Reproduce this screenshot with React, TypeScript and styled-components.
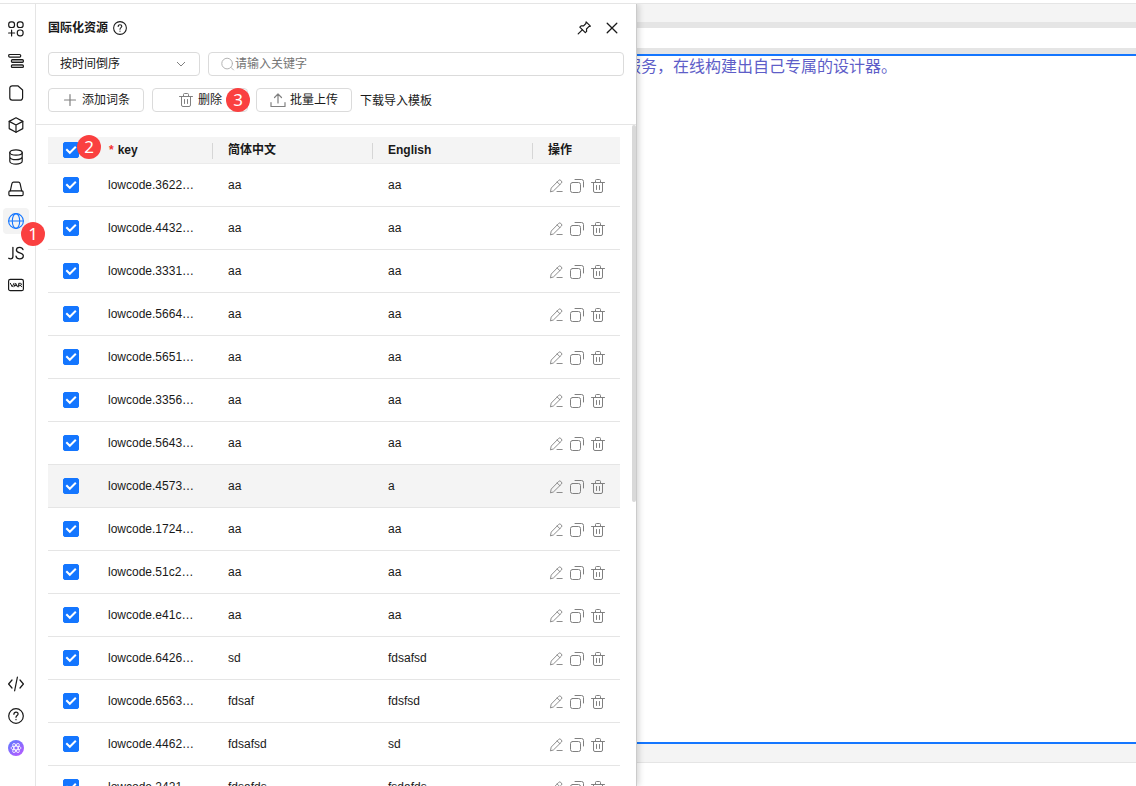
import React from 'react';
import styled, { createGlobalStyle, css } from 'styled-components';

const GlobalStyle = createGlobalStyle`
  *, *::before, *::after { box-sizing: border-box; }
  body {
    margin: 0;
    background: #fff;
    color: #191919;
    font: 12px/18px "Liberation Sans", "Noto Sans CJK SC", sans-serif;
  }
  button, input, select { font: inherit; color: inherit; }
  svg { display: block; flex: none; }
`;

const Shell = styled.div`
  display: flex;
  flex-direction: column;
  height: 100vh;
  overflow: hidden;
`;

const TopEdge = styled.div`
  flex: none;
  height: 4px;
  border-bottom: 1px solid #e5e5e5;
`;

const Workspace = styled.div`
  display: flex;
  flex: 1;
  min-height: 0;
`;

const Rail = styled.nav`
  position: relative;
  z-index: 3;
  display: flex;
  flex: none;
  flex-direction: column;
  justify-content: space-between;
  width: 36px;
  padding: 12px 0 25px 3px;
  background: #fff;
  border-right: 1px solid #e5e5e5;
`;

const RailGroup = styled.div`
  display: flex;
  flex-direction: column;
  gap: 6px;
`;

const RailButton = styled.button<{ $active?: boolean }>`
  position: relative;
  display: grid;
  place-items: center;
  width: 26px;
  height: 26px;
  padding: 0;
  border: 0;
  border-radius: 4px;
  background: ${(p) => (p.$active ? '#f3f3f3' : 'transparent')};
  color: ${(p) => (p.$active ? '#1476ff' : '#191919')};
`;

const Marker = styled.span<{ $left: number; $top: number }>`
  position: absolute;
  z-index: 4;
  left: ${(p) => p.$left}px;
  top: ${(p) => p.$top}px;
  display: grid;
  place-items: center;
  width: 24px;
  height: 24px;
  border-radius: 50%;
  background: #fa4040;
  color: #fff;
  font: 17px/24px "Noto Sans", sans-serif;
`;

const Panel = styled.section`
  position: relative;
  z-index: 2;
  display: flex;
  flex: none;
  flex-direction: column;
  width: 601px;
  background: #fff;
  border-right: 1px solid #cbcbcb;
  box-shadow: 2px 0 6px rgba(0, 0, 0, 0.16);
  clip-path: inset(0 -12px 0 0);
`;

const PanelHead = styled.header`
  display: flex;
  flex: none;
  flex-direction: column;
  gap: 12px;
  padding: 12px;
  border-bottom: 1px solid #e5e5e5;
`;

const TitleRow = styled.div`
  display: flex;
  align-items: center;
  gap: 4px;
  height: 24px;
`;

const Title = styled.h1`
  margin: 0;
  font-size: 12px;
  line-height: 16px;
  font-weight: 700;
`;

const TitleTools = styled.div`
  display: flex;
  gap: 12px;
  margin-left: auto;
  padding-right: 4px;
`;

const IconButton = styled.button`
  display: grid;
  place-items: center;
  width: 16px;
  height: 16px;
  padding: 0;
  border: 0;
  background: none;
`;

const ToolRow = styled.div`
  display: flex;
  align-items: center;
  gap: 8px;
`;

const fieldBox = css`
  height: 24px;
  border: 1px solid #dbdbdb;
  border-radius: 4px;
  background: #fff;
`;

const SelectBox = styled.div`
  ${fieldBox}
  display: grid;
  flex: none;
  align-items: center;
  width: 152px;
  > * { grid-area: 1 / 1; }
  > svg { justify-self: end; margin-right: 13px; pointer-events: none; }
`;

const Select = styled.select`
  appearance: none;
  width: 100%;
  height: 22px;
  padding: 0 28px 0 11px;
  border: 0;
  background: none;
  outline: 0;
`;

const SearchBox = styled.label`
  ${fieldBox}
  display: flex;
  flex: 1;
  align-items: center;
  min-width: 0;
  padding: 0 12px;
  color: #b0b0b0;
`;

const SearchInput = styled.input`
  flex: 1;
  min-width: 0;
  padding: 0;
  border: 0;
  outline: 0;
  background: none;
  color: #191919;
  &::placeholder { color: #757575; }
`;

const ToolButton = styled.button`
  ${fieldBox}
  position: relative;
  display: flex;
  align-items: center;
  justify-content: center;
  gap: 4px;
  width: 96px;
  padding: 0;
  > svg { color: #808080; }
`;

const TemplateLink = styled.a`
  padding-top: 2px;
  color: #191919;
  text-decoration: none;
`;

const Scroller = styled.div`
  display: flex;
  flex: 1;
  min-height: 0;
`;

const TablePane = styled.div`
  flex: 1;
  min-width: 0;
  padding: 12px;
  overflow-y: auto;
  scrollbar-width: none;
`;

const ScrollThumb = styled.div`
  flex: none;
  width: 4px;
  height: 57%;
  border-radius: 2px;
  background: #d9d9d9;
`;

const Table = styled.table`
  width: 100%;
  table-layout: fixed;
  border-collapse: separate;
  border-spacing: 0;
`;

const CheckCol = styled.col` width: 44px; `;
const KeyCol = styled.col` width: 120px; `;
const ActionCol = styled.col` width: 88px; `;

const Th = styled.th<{ $check?: boolean }>`
  position: relative;
  height: 27px;
  padding: ${(p) => (p.$check ? '0 0 0 15px' : '0 16px')};
  background: #f4f4f4;
  border-bottom: 1px solid #ebebeb;
  text-align: left;
  font-weight: 700;
  line-height: 16px;
  white-space: nowrap;
`;

const DividedTh = styled(Th)`
  &::before {
    content: "";
    position: absolute;
    left: 0;
    top: 6px;
    width: 1px;
    height: 16px;
    background: #d6d6d6;
  }
`;

const Required = styled.span`
  margin: 0 4px 0 1px;
  color: #f23030;
`;

const Row = styled.tr<{ $hover?: boolean }>`
  background: ${(p) => (p.$hover ? '#f4f4f4' : '#fff')};
`;

const Td = styled.td<{ $check?: boolean }>`
  height: 43px;
  padding: ${(p) => (p.$check ? '0 0 0 15px' : '0 16px')};
  border-bottom: 1px solid #e5e5e5;
  white-space: nowrap;
`;

const Actions = styled.div`
  display: flex;
  gap: 5px;
  padding-top: 2px;
  color: #808080;
`;

const CheckWrap = styled.span`
  display: grid;
  width: 16px;
  height: 16px;
  > * { grid-area: 1 / 1; }
  > svg { position: relative; pointer-events: none; }
`;

const CheckInput = styled.input`
  appearance: none;
  width: 16px;
  height: 16px;
  margin: 0;
  border: 1px solid #c2c2c2;
  border-radius: 2px;
  background: #fff;
  &:checked { border-color: #1476ff; background: #1476ff; }
  &:not(:checked) + svg { visibility: hidden; }
`;

const Canvas = styled.main`
  display: flex;
  flex: 1;
  flex-direction: column;
  min-width: 0;
  background: #fff;
`;

const CanvasBand = styled.div`
  flex: none;
  height: 18px;
  background: #f4f4f4;
`;

const AddressBand = styled.div`
  flex: none;
  height: 32px;
  border: solid #e5e5e5;
  border-width: 6px 0;
`;

const Stage = styled.div`
  flex: 1;
  min-height: 0;
  border: solid #1476ff;
  border-width: 2px 0;
`;

const StageText = styled.p`
  margin: 0 0 0 -12px;
  color: #5e5ec8;
  font: 16px/18px "Noto Sans CJK SC", sans-serif;
  white-space: nowrap;
`;

const CanvasFoot = styled.div`
  flex: none;
  height: 42px;
  border-top: 18px solid #f4f4f4;
  &::before {
    content: "";
    display: block;
    height: 1px;
    background: #e5e5e5;
  }
`;

type SvgProps = { size?: number; sw?: number; children: React.ReactNode };

const Svg = ({ size = 16, sw = 1, children }: SvgProps) => (
  <svg width={size} height={size} viewBox="0 0 16 16" fill="none" stroke="currentColor"
    strokeWidth={sw} strokeLinecap="round" strokeLinejoin="round" aria-hidden="true">
    {children}
  </svg>
);

const ComponentsIcon = () => (
  <Svg sw={1.2}>
    <rect x="0.7" y="0.9" width="5.8" height="5.6" rx="2.3" />
    <rect x="9.3" y="0.9" width="5.8" height="5.6" rx="2.3" />
    <rect x="9.3" y="9" width="5.8" height="5.8" rx="2.5" />
    <path d="M3.6 9.2v5.800M0.6 12h6" />
  </Svg>
);
const OutlineIcon = () => (
  <Svg sw={1.2}>
    <rect x="0.7" y="1.500" width="12" height="2.600" rx="1" />
    <rect x="3.4" y="6.700" width="12" height="2.600" rx="1" fill="#bbb" />
    <rect x="3.4" y="11.900" width="12" height="2.600" rx="1" fill="#bbb" />
  </Svg>
);
const PageIcon = () => (
  <Svg sw={1.2}>
    <path d="M4.200 0.800h5.600L14.600 5v7.800a2.400 2.400 0 0 1-2.400 2.400H4.200a2.400 2.400 0 0 1-2.400-2.400V3.200a2.400 2.400 0 0 1 2.400-2.400z" />
  </Svg>
);
const CubeIcon = () => (
  <Svg sw={1.2}>
    <path d="M8 0.800l6.800 3.600v7.200L8 15.200l-6.800-3.600V4.400z" />
    <path d="M1.200 4.400L8 8l6.800-3.600M8 8v7.200" />
  </Svg>
);
const DatabaseIcon = () => (
  <Svg sw={1.2}>
    <ellipse cx="8" cy="3.500" rx="6.200" ry="2.600" />
    <path d="M1.800 3.500v8.700c0 1.600 2.800 2.900 6.200 2.900s6.200-1.300 6.200-2.900V3.500M1.800 7.800c0 1.600 2.800 2.900 6.200 2.900s6.200-1.300 6.200-2.900" />
  </Svg>
);
const BridgeIcon = () => (
  <Svg sw={1.2}>
    <path d="M2.300 9.800L3.900 2.600A1.800 1.800 0 0 1 5.600 1.200h4.800A1.800 1.800 0 0 1 12.100 2.600l1.600 7.200" />
    <rect x="0.900" y="9.900" width="14.200" height="4.700" rx="1.200" />
  </Svg>
);
const GlobeIcon = () => (
  <Svg sw={1.1}>
    <circle cx="8" cy="8" r="7.400" />
    <ellipse cx="8" cy="8" rx="3.700" ry="7.400" />
    <path d="M0.600 8h14.800" />
  </Svg>
);
const JsIcon = () => (
  <Svg sw={1.3}>
    <path d="M4.900 2.300v9.200c0 1.700-1 2.400-2.300 2.400-.9 0-1.400-.2-1.900-.6" />
    <path d="M15 4.600c-.5-1.500-1.700-2.300-3.300-2.300-2 0-3.300 1-3.300 2.700 0 3.900 6.900 1.900 6.900 5.800 0 1.900-1.400 3.100-3.600 3.100-1.900 0-3.300-.9-3.700-2.700" />
  </Svg>
);
const VarIcon = () => (
  <Svg>
    <rect x="0.600" y="2.300" width="14.800" height="11.400" rx="1.800" strokeWidth="1.200" />
    <path d="M2.400 6.300L4.200 9.800 6 6.300M5.900 9.800L7.700 6.300 9.500 9.800M6.600 8.600h2.200M10.700 9.800V6.300h1.600q1.200 0 1.200 1t-1.200 1h-1.600M12.200 8.300l1.500 1.500" strokeWidth="1" />
  </Svg>
);
const CodeIcon = () => (
  <Svg sw={1.2}>
    <path d="M4 4L0.600 8 4 12M12 4l3.400 4L12 12M9.400 1.200L6.600 14.800" />
  </Svg>
);
const HelpIcon = ({ size = 16 }: { size?: number }) => (
  <Svg size={size} sw={1.2}>
    <circle cx="8" cy="8" r="7.300" />
    <path d="M5.900 6.300c0-1.300.9-2.100 2.100-2.100s2.100.8 2.100 1.900c0 1.400-2.100 1.500-2.100 3.200M8 11.400v.3" />
  </Svg>
);
const AssistantIcon = () => (
  <svg width="16" height="16" viewBox="0 0 16 16" aria-hidden="true">
    <defs>
      <linearGradient id="assistant" x1="0" y1="0" x2="0.700" y2="1">
        <stop offset="0" stopColor="#5a7cff" />
        <stop offset="1" stopColor="#b15cff" />
      </linearGradient>
    </defs>
    <circle cx="8" cy="8" r="8" fill="url(#assistant)" />
    <g fill="none" stroke="#fff" strokeWidth="0.800">
      <ellipse cx="8" cy="8" rx="5.200" ry="1.900" />
      <ellipse cx="8" cy="8" rx="5.200" ry="1.900" transform="rotate(60 8 8)" />
      <ellipse cx="8" cy="8" rx="5.200" ry="1.900" transform="rotate(120 8 8)" />
    </g>
  </svg>
);
const PinIcon = () => (
  <Svg sw={1.2}>
    <path d="M10.100 1.900l4.300 4.300-1.600.4-2.300 2.400.1 2.400-1.300 1.200L3.800 7.100l1.300-1.300 2.500.1 2.300-2.400z" />
    <path d="M6.300 9.800L2.200 13.900" />
  </Svg>
);
const CloseIcon = () => (
  <Svg sw={1.3}><path d="M3.200 3.200l9.600 9.600M12.800 3.200l-9.600 9.600" /></Svg>
);
const ChevronIcon = () => (
  <svg width="10" height="10" viewBox="0 0 10 10" fill="none" stroke="#808080" aria-hidden="true">
    <path d="M1 3l4 4 4-4" />
  </svg>
);
const SearchIcon = () => (
  <Svg size={14} sw={1.1}><circle cx="7" cy="7.500" r="6.100" /><path d="M11.500 12l2.800 2.800" /></Svg>
);
const PlusIcon = () => <Svg sw={1.2}><path d="M8 2.500v11M2.500 8h11" /></Svg>;
const UploadIcon = () => (
  <Svg sw={1.200}><path d="M8 11V2M4.500 5.500L8 2l3.500 3.500M1 10.500v4h14v-4" /></Svg>
);
const TrashIcon = () => (
  <Svg>
    <path d="M1.500 4.500h13M5.500 4.200V2.500a1 1 0 0 1 1-1h3a1 1 0 0 1 1 1v1.700M3.500 4.500v8.500a1.500 1.500 0 0 0 1.500 1.500h6a1.500 1.500 0 0 0 1.500-1.500V4.500M6.500 7.500v4M9.500 7.500v4" />
  </Svg>
);
const EditIcon = () => (
  <Svg sw={0.9}>
    <path d="M2.500 13.500l.7-3.400 7.500-7.700a1.500 1.500 0 0 1 2.100 0l.6.600a1.500 1.500 0 0 1 0 2.100l-7.700 7.600zM9.200 4l2.700 2.700M9 13.500h5.200" />
  </Svg>
);
const CopyIcon = () => (
  <Svg>
    <rect x="1.500" y="4.500" width="10" height="10" rx="2" />
    <path d="M6 1.500h6.500a2 2 0 0 1 2 2V9" />
  </Svg>
);

const Check = ({ label }: { label: string }) => (
  <CheckWrap>
    <CheckInput type="checkbox" defaultChecked aria-label={label} />
    <svg width="16" height="16" viewBox="0 0 16 16" fill="none" stroke="#fff" strokeWidth="2" aria-hidden="true">
      <path d="M3.300 7.300l3.500 3.500 6-6" />
    </svg>
  </CheckWrap>
);

const railTop = [
  { label: '物料', icon: <ComponentsIcon /> },
  { label: '大纲树', icon: <OutlineIcon /> },
  { label: '页面', icon: <PageIcon /> },
  { label: '区块', icon: <CubeIcon /> },
  { label: '数据源', icon: <DatabaseIcon /> },
  { label: '资源', icon: <BridgeIcon /> },
  { label: '国际化', icon: <GlobeIcon />, active: true },
  { label: '页面 JS', icon: <JsIcon /> },
  { label: '状态', icon: <VarIcon /> },
];
const railBottom = [
  { label: '源码', icon: <CodeIcon /> },
  { label: '帮助', icon: <HelpIcon /> },
  { label: '助手', icon: <AssistantIcon /> },
];

const entries = [
  ['lowcode.3622…', 'aa', 'aa'],
  ['lowcode.4432…', 'aa', 'aa'],
  ['lowcode.3331…', 'aa', 'aa'],
  ['lowcode.5664…', 'aa', 'aa'],
  ['lowcode.5651…', 'aa', 'aa'],
  ['lowcode.3356…', 'aa', 'aa'],
  ['lowcode.5643…', 'aa', 'aa'],
  ['lowcode.4573…', 'aa', 'a'],
  ['lowcode.1724…', 'aa', 'aa'],
  ['lowcode.51c2…', 'aa', 'aa'],
  ['lowcode.e41c…', 'aa', 'aa'],
  ['lowcode.6426…', 'sd', 'fdsafsd'],
  ['lowcode.6563…', 'fdsaf', 'fdsfsd'],
  ['lowcode.4462…', 'fdsafsd', 'sd'],
  ['lowcode.2421…', 'fdsafds', 'fsdafds'],
];
const hoveredEntry = 7;

export default function App() {
  return (
    <>
      <GlobalStyle />
      <Shell>
        <TopEdge />
        <Workspace>
          <Rail>
            <RailGroup>
              {railTop.map((item) => (
                <RailButton key={item.label} $active={item.active} aria-label={item.label}>
                  {item.icon}
                  {item.active && <Marker $left={18} $top={14}>1</Marker>}
                </RailButton>
              ))}
            </RailGroup>
            <RailGroup>
              {railBottom.map((item) => (
                <RailButton key={item.label} aria-label={item.label}>{item.icon}</RailButton>
              ))}
            </RailGroup>
          </Rail>
          <Panel>
            <PanelHead>
              <TitleRow>
                <Title>国际化资源</Title>
                <IconButton aria-label="说明"><HelpIcon size={14} /></IconButton>
                <TitleTools>
                  <IconButton aria-label="固定"><PinIcon /></IconButton>
                  <IconButton aria-label="关闭"><CloseIcon /></IconButton>
                </TitleTools>
              </TitleRow>
              <ToolRow>
                <SelectBox>
                  <Select aria-label="排序"><option>按时间倒序</option></Select>
                  <ChevronIcon />
                </SelectBox>
                <SearchBox>
                  <SearchIcon />
                  <SearchInput type="text" placeholder="请输入关键字" aria-label="搜索" />
                </SearchBox>
              </ToolRow>
              <ToolRow>
                <ToolButton><PlusIcon />添加词条</ToolButton>
                <ToolButton>
                  <TrashIcon />删除
                  <Marker $left={73} $top={-1}>3</Marker>
                </ToolButton>
                <ToolButton><UploadIcon />批量上传</ToolButton>
                <TemplateLink href="#template">下载导入模板</TemplateLink>
              </ToolRow>
            </PanelHead>
            <Scroller>
              <TablePane>
                <Table>
                  <colgroup><CheckCol /><KeyCol /><col /><col /><ActionCol /></colgroup>
                  <thead>
                    <tr>
                      <Th $check><Check label="全选" /><Marker $left={29} $top={-2}>2</Marker></Th>
                      <Th><Required>*</Required>key</Th>
                      <DividedTh>简体中文</DividedTh>
                      <DividedTh>English</DividedTh>
                      <DividedTh>操作</DividedTh>
                    </tr>
                  </thead>
                  <tbody>
                    {entries.map(([key, zh, en], i) => (
                      <Row key={key} $hover={i === hoveredEntry}>
                        <Td $check><Check label={key} /></Td>
                        <Td>{key}</Td>
                        <Td>{zh}</Td>
                        <Td>{en}</Td>
                        <Td>
                          <Actions>
                            <IconButton aria-label="编辑"><EditIcon /></IconButton>
                            <IconButton aria-label="复制"><CopyIcon /></IconButton>
                            <IconButton aria-label="删除"><TrashIcon /></IconButton>
                          </Actions>
                        </Td>
                      </Row>
                    ))}
                  </tbody>
                </Table>
              </TablePane>
              <ScrollThumb />
            </Scroller>
          </Panel>
          <Canvas>
            <CanvasBand />
            <AddressBand />
            <Stage>
              <StageText>服务，在线构建出自己专属的设计器。</StageText>
            </Stage>
            <CanvasFoot />
          </Canvas>
        </Workspace>
      </Shell>
    </>
  );
}
